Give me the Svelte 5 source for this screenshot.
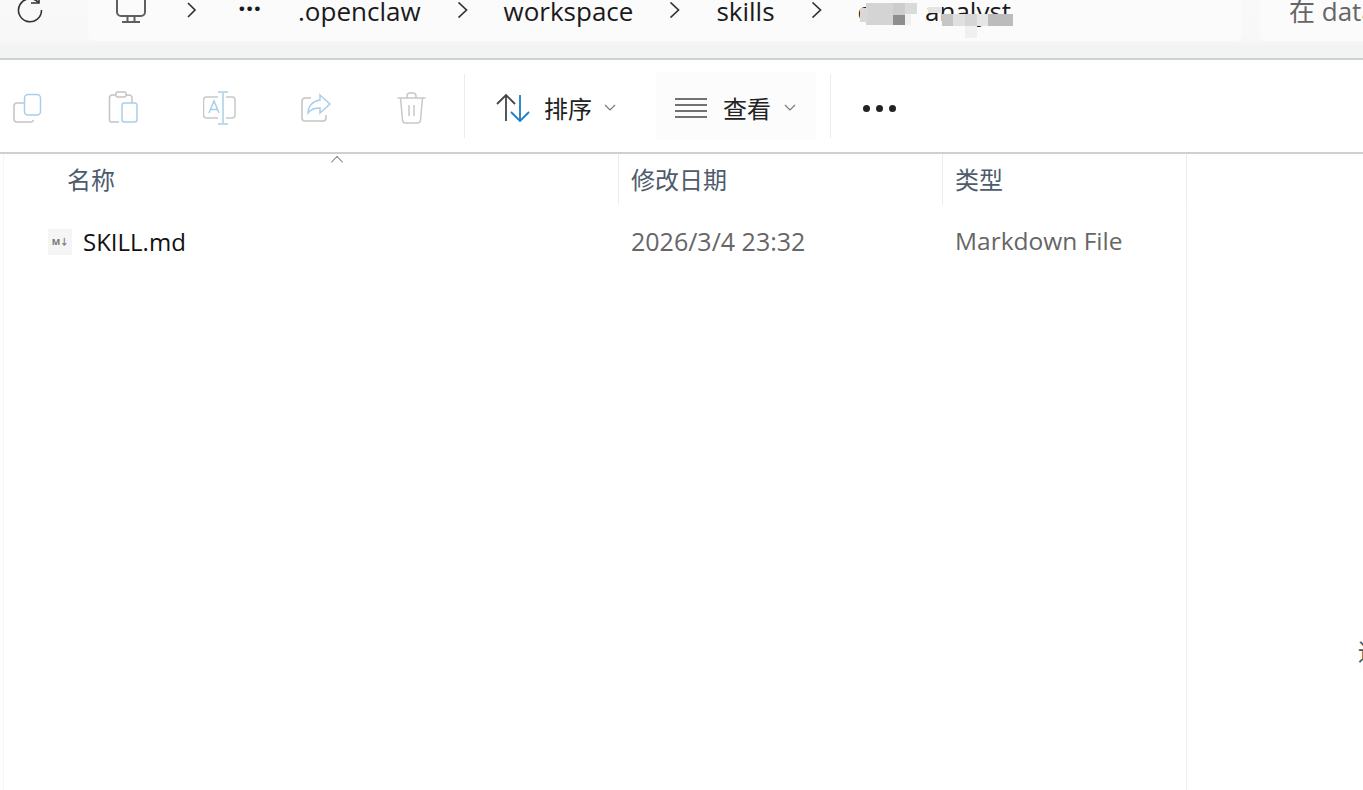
<script>
  const crumbs = ['.openclaw', 'workspace', 'skills'];

  // mosaic that hides the folder name in the screenshot
  const mosaic = [
    [866, 3, 27, 22, '#d4d4d4'], [893, 3, 12, 12, '#cdcdcd'], [893, 15, 12, 10, '#8e8e8e'],
    [905, 3, 12, 11, '#dadada'], [905, 14, 6, 11, '#f0f0f0'], [860, 8, 8, 14, '#d8d8d8'],
    [928, 7, 14, 6, '#e4e4e4'], [942, 14, 11, 12, '#c6c6c6'], [953, 14, 12, 12, '#e0e0e0'],
    [965, 14, 12, 12, '#d6d6d6'], [977, 14, 11, 12, '#e6e6e6'], [988, 14, 25, 12, '#bcbcbc'],
    [965, 26, 12, 12, '#f0f0f0']
  ];
</script>

<div class="window">
  <header class="addressbar">
    <div class="refresh">
      <svg width="28" height="28" viewBox="0 0 28 28" fill="none" stroke="#333" stroke-width="1.6">
        <path d="M22.5 6.5A11.5 11.5 0 1 0 25.5 14" />
        <path d="M23 -1v8h-8" />
      </svg>
    </div>
    <nav class="crumbs">
      <span class="pc">
        <svg width="32" height="28" viewBox="0 0 32 28" fill="none" stroke="#5f5f5f" stroke-width="2">
          <path d="M2 -6h28v18a4 4 0 0 1-4 4H6a4 4 0 0 1-4-4z" />
          <path d="M12.500 16v5M19.500 16v5M7 22h18" />
        </svg>
      </span>
      <svg class="chev first" width="12" height="16" viewBox="0 0 12 16" fill="none" stroke="#333" stroke-width="1.700"><path d="M2 1l7 7-7 7" /></svg>
      <span class="more">···</span>
      {#each crumbs as label}
        <span class="crumb">{label}</span>
        <svg class="chev" width="12" height="16" viewBox="0 0 12 16" fill="none" stroke="#333" stroke-width="1.700"><path d="M1.500 .5L9.500 8l-8 7.500" /></svg>
      {/each}
      <span class="crumb tail">c</span>
      <span class="crumb last">analyst</span>
    </nav>
    <div class="search">在 data</div>
  </header>

  <div class="toolbar">
    <div class="tool-icons">
      <svg width="32" height="32" viewBox="0 0 32 32" fill="none" stroke-width="1.500">
        <path d="M13 11H6a3 3 0 0 0-3 3v13a3 3 0 0 0 3 3h14a3 3 0 0 0 2.500-2" stroke="#c4c4c4" />
        <rect x="13.500" y="2.500" width="16" height="20.500" rx="3.500" stroke="#a9cfe8" />
      </svg>
      <svg width="32" height="36" viewBox="0 0 32 36" fill="none" stroke-width="1.500">
        <path d="M9 5H5.500a3 3 0 0 0-3 3v22a2 2 0 0 0 2 2H12M25 13V8a3 3 0 0 0-3-3h-3" stroke="#c4c4c4" />
        <rect x="9" y="2" width="10" height="5" rx="1.500" stroke="#c4c4c4" />
        <rect x="15" y="13" width="15" height="19" rx="2.500" stroke="#a9cfe8" />
      </svg>
      <svg width="34" height="36" viewBox="0 0 34 36" fill="none" stroke-width="1.500">
        <path d="M15 7H3.500a3 3 0 0 0-3 3v15a3 3 0 0 0 3 3H15M23 7h6a3 3 0 0 1 3 3v15a3 3 0 0 1-3 3h-6" stroke="#c8c8c8" />
        <path d="M6 23l5-12 5 12M7.500 19.500h7" stroke="#a9cfe8" />
        <path d="M20 3v30M15 2h10M15 34h10" stroke="#a9cfe8" />
      </svg>
      <svg width="32" height="32" viewBox="0 0 32 32" fill="none" stroke-width="1.500">
        <path d="M10 6H4a3 3 0 0 0-3 3v17a3 3 0 0 0 3 3h18a3 3 0 0 0 3-3v-3" stroke="#c4c4c4" />
        <path d="M19 3l10 9-10 9v-5c-5 0-9 1-12 5 0-7 5-12 12-13z" stroke="#a9cfe8" />
      </svg>
      <svg width="32" height="34" viewBox="0 0 32 34" fill="none" stroke="#c8c8c8" stroke-width="1.500">
        <path d="M.5 7h28M10 7V5a3 3 0 0 1 3-3h3a3 3 0 0 1 3 3v2" />
        <path d="M3.500 7l2 22a3 3 0 0 0 3 3h12a3 3 0 0 0 3-3l2-22" />
        <path d="M12 14v11M17 14v11" />
      </svg>
    </div>
    <span class="divider first"></span>
    <div class="cmd sort">
      <svg width="34" height="30" viewBox="0 0 34 30" fill="none" stroke-width="1.800">
        <path d="M10 28V2M1 11l9-9 9 9" stroke="#444" />
        <path d="M24 2v26M15 19l9 9 9-9" stroke="#1a7fc6" />
      </svg>
      <span class="cmd-label">排序</span>
      <svg class="caret" width="12" height="8" viewBox="0 0 12 8" fill="none" stroke="#777" stroke-width="1.200"><path d="M1 1l5 5 5-5" /></svg>
    </div>
    <div class="cmd view">
      <svg width="32" height="20" viewBox="0 0 32 20" fill="none" stroke="#444" stroke-width="1.600">
        <path d="M0 1h32M0 7h32M0 13h32M0 19h32" />
      </svg>
      <span class="cmd-label">查看</span>
      <svg class="caret" width="12" height="8" viewBox="0 0 12 8" fill="none" stroke="#777" stroke-width="1.200"><path d="M1 1l5 5 5-5" /></svg>
    </div>
    <span class="divider"></span>
    <div class="dots"><i></i><i></i><i></i></div>
  </div>

  <main class="files">
    <div class="head">
      <div class="col name">名称<span class="sort-caret"></span></div>
      <div class="col">修改日期</div>
      <div class="col">类型</div>
      <div class="col end"></div>
    </div>
    <div class="row">
      <div class="cell filename">
        <span class="md-icon">M↓</span>
        SKILL.md
      </div>
      <div class="cell muted date">2026/3/4 23:32</div>
      <div class="cell muted type">Markdown File</div>
    </div>
  </main>

  <svg class="mosaic" width="1363" height="42">
    {#each mosaic as [x, y, w, h, fill]}
      <rect {x} {y} width={w} height={h} {fill} />
    {/each}
  </svg>
  <span class="edge">适</span>
</div>

<style>
  :global(body) {
    margin: 0;
    background: #fff;
    overflow: hidden;
  }

  .window {
    position: relative;
    width: 1363px;
    height: 790px;
    overflow: hidden;
    display: flex;
    flex-direction: column;
    font-family: "Open Sans", "Noto Sans CJK SC", sans-serif;
    color: #1a1a1a;
  }

  /* ── Address bar ── */
  .addressbar {
    height: 58px;
    flex: none;
    display: flex;
    align-items: flex-start;
    background: linear-gradient(#f9f9f9 0, #f8f8f8 38px, #f2f4f4 46px);
    border-bottom: 2px solid #cfd1d1;
  }

  .refresh {
    width: 88px;
    flex: none;
    height: 24px;
    padding-left: 16px;
    box-sizing: border-box;
    margin-top: -4px;
  }

  .crumbs {
    width: 1154px;
    height: 41px;
    flex: none;
    display: flex;
    align-items: flex-start;
    background: #fbfbfb;
    border-radius: 0 0 6px 6px;
    overflow: hidden;
  }

  .pc {
    margin-left: 27px;
    height: 28px;
  }

  .chev {
    flex: none;
    margin: 2px 0 0 1px;
  }

  .chev.first {
    margin-left: 39px;
  }

  .more {
    width: 25px;
    margin: -2px 0 0 40px;
    font-size: 27px;
    line-height: 20px;
    font-weight: 700;
  }

  .crumb {
    flex: none;
    padding: 0 35px;
    font-size: 26px;
    line-height: 36px;
    margin-top: -7px;
    white-space: nowrap;
  }

  .crumb.tail {
    padding: 0;
    margin-left: 35px;
  }

  .crumb.last {
    padding: 0;
    margin-left: 55px;
  }

  .search {
    margin: -7px 0 0 18px;
    padding-left: 29px;
    flex: 1;
    height: 48px;
    line-height: 36px;
    font-size: 26px;
    color: #666;
    background: #fbfbfb;
    white-space: nowrap;
    overflow: hidden;
  }

  /* ── Command bar ── */
  .toolbar {
    height: 92px;
    flex: none;
    display: flex;
    align-items: center;
    border-bottom: 2px solid #cfd1d1;
  }

  .tool-icons {
    width: 430px;
    flex: none;
    padding: 4px 0 0 11px;
    display: flex;
    align-items: center;
    gap: 64px;
    box-sizing: border-box;
  }

  .divider {
    width: 1px;
    height: 64px;
    flex: none;
    background: #ececec;
  }

  .divider.first {
    margin-left: 34px;
  }

  .cmd {
    display: flex;
    align-items: center;
    height: 68px;
    padding-top: 4px;
    flex: none;
    box-sizing: border-box;
  }

  .sort {
    width: 191px;
    padding-left: 31px;
    gap: 14px;
  }

  .view {
    width: 160px;
    padding-left: 19px;
    gap: 16px;
    background: #fcfcfc;
    margin-right: 14px;
  }

  .cmd-label {
    margin-top: 2px;
    font-size: 24px;
    line-height: 32px;
    color: #222;
  }

  .caret {
    margin-left: -3px;
  }

  .sort .caret {
    margin-left: -2px;
  }

  .dots {
    margin: 4px 0 0 32px;
    display: flex;
    gap: 6px;
  }

  .dots i {
    width: 7px;
    height: 7px;
    border-radius: 50%;
    background: #222;
  }

  /* ── File list ── */
  .files {
    flex: 1;
    display: flex;
    flex-direction: column;
    border-left: 1px solid #f6f6f6;
    margin-left: 3px;
  }

  .head,
  .row {
    display: grid;
    grid-template-columns: 615px 324px 244px 1fr;
  }

  .head {
    height: 51px;
    flex: none;
  }

  .col {
    position: relative;
    box-sizing: border-box;
    padding: 9px 0 0 12px;
    font-size: 24px;
    line-height: 34px;
    color: #4e5b6b;
    border-right: 1px solid #ececec;
  }

  .col.name {
    padding-left: 63px;
  }

  .col.end {
    border-right: 0;
  }

  .sort-caret {
    position: absolute;
    left: 328px;
    top: 3px;
    width: 9px;
    height: 9px;
    border-left: 1px solid #666;
    border-top: 1px solid #666;
    transform: rotate(45deg) scale(0.85);
  }

  .row {
    flex: 1;
  }

  .cell {
    font-size: 24px;
    line-height: 72px;
    padding-left: 12px;
    white-space: nowrap;
  }

  .filename {
    display: flex;
    align-items: flex-start;
    gap: 11px;
    padding-left: 44px;
    line-height: 74px;
    color: #111;
  }

  .md-icon {
    width: 24px;
    height: 26px;
    margin-top: 24px;
    flex: none;
    display: flex;
    align-items: center;
    justify-content: center;
    background: #f5f5f5;
    font-size: 9px;
    line-height: 12px;
    font-weight: 700;
    color: #777;
    letter-spacing: -0.5px;
  }

  .muted {
    color: #666;
  }

  .date {
    font-size: 25px;
  }

  .type {
    font-size: 24.500px;
    border-right: 1px solid #f0f0f0;
  }

  /* blur patches and the cut-off label on top of the window */
  .mosaic {
    position: absolute;
    left: 0;
    top: 0;
  }

  .edge {
    position: absolute;
    left: 1358px;
    top: 636px;
    font-size: 24px;
    line-height: 32px;
    color: #555;
  }
</style>
